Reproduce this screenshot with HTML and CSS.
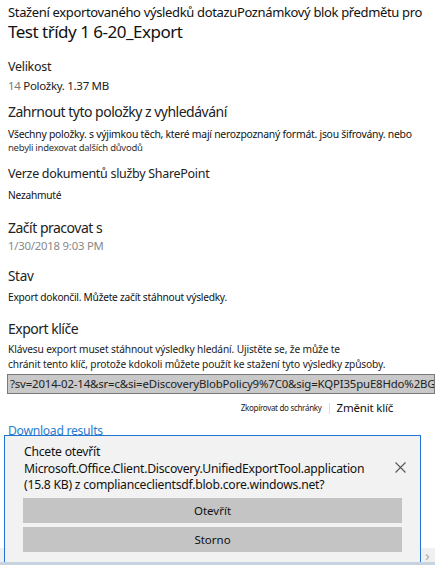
FILE: index.html
```html
<!DOCTYPE html>
<html lang="cs">
<head>
    <meta charset="UTF-8">
    <meta name="viewport" content="width=device-width, initial-scale=1.0">
    <title>Export</title>
    <link rel="stylesheet" href="styles.css">
</head>
<body>

<div class="panel">
    <header class="head">
        <p class="subtitle">Stažení exportovaného výsledků dotazuPoznámkový blok předmětu pro</p>
        <h1>Test třídy 1 6-20_Export</h1>
    </header>

    <section class="field size">
        <h3>Velikost</h3>
        <p class="value"><span class="muted">14</span> Položky. 1.37 MB</p>
    </section>

    <section class="field include">
        <h2>Zahrnout tyto položky z vyhledávání</h2>
        <p class="small two">Všechny položky. s výjimkou těch, které mají nerozpoznaný formát. jsou šifrovány. nebo<br><span class="tiny">nebyli indexovat dalších důvodů</span></p>
    </section>

    <section class="field versions">
        <h3>Verze dokumentů služby SharePoint</h3>
        <p class="small">Nezahmuté</p>
    </section>

    <section class="field started">
        <h2>Začít pracovat s</h2>
        <p class="date">1/30/2018 9:03 PM</p>
    </section>

    <section class="field status">
        <h3>Stav</h3>
        <p class="small">Export dokončil. Můžete začít stáhnout výsledky.</p>
    </section>

    <section class="field export">
        <h2>Export klíče</h2>
        <p class="desc">Klávesu export muset stáhnout výsledky hledání. Ujistěte se, že může te<br>chránit tento klíč, protože kdokoli můžete použít ke stažení tyto výsledky způsoby.</p>
        <div class="keybox">?sv=2014-02-14&amp;sr=c&amp;si=eDiscoveryBlobPolicy9%7C0&amp;sig=KQPI35puE8Hdo%2BG3c</div>
        <div class="key-actions">
            <span class="copy">Zkopírovat do schránky</span>
            <span class="sep"></span>
            <span class="change">Změnit klíč</span>
        </div>
    </section>

    <a class="download" href="#">Download results</a>
</div>

<div class="strip">
    <span class="arrow">&#x203A;</span>
</div>

<div class="prompt">
    <div class="prompt-top">
        <p class="prompt-text">Chcete otevřít<br>Microsoft.Office.Client.Discovery.UnifiedExportTool.application<br>(15.8 KB) z complianceclientsdf.blob.core.windows.net?</p>
        <svg class="close" width="11" height="11" viewBox="0 0 11 11">
            <path d="M0.5 0.5 L10.5 10.5 M10.5 0.5 L0.5 10.5" stroke="#555" stroke-width="1.1" fill="none"/>
        </svg>
    </div>
    <button class="prompt-btn">Otevřít</button>
    <button class="prompt-btn">Storno</button>
</div>

</body>
</html>
```

FILE: styles.css
```css
body {
    font-family: 'Noto Sans', 'Open Sans', sans-serif;
    color: #222;
    background-color: #fff;
    margin: 0;
    padding: 0;
    height: 565px;
    overflow: hidden;
    position: relative;
}
p {
    margin: 0;
}
.panel {
    padding: 3px 8px 0 8px;
}
.subtitle {
    font-size: 13px;
    line-height: 18px;
    letter-spacing: -0.35px;
    white-space: nowrap;
    color: #111;
}
.head h1 {
    margin: 0;
    font-size: 17px;
    font-weight: normal;
    line-height: 22px;
    letter-spacing: -0.5px;
    color: #111;
}
.field h2 {
    margin: 0;
    font-size: 14px;
    font-weight: normal;
    line-height: 20px;
    letter-spacing: -0.5px;
    color: #222;
}
.field h3 {
    margin: 0;
    font-size: 12.5px;
    font-weight: normal;
    line-height: 18px;
    letter-spacing: -0.3px;
    color: #222;
}
.size { margin-top: 15px; }
.include { margin-top: 8px; }
.versions { margin-top: 11px; }
.started { margin-top: 16px; }
.status { margin-top: 13px; }
.export { margin-top: 15px; }

.value {
    margin-top: 2px;
    font-size: 11.5px;
    line-height: 16px;
    letter-spacing: -0.3px;
    color: #222;
}
.muted {
    color: #777;
}
.small {
    margin-top: 5px;
    font-size: 10.2px;
    line-height: 14px;
    letter-spacing: -0.25px;
    color: #111;
}
.small.two {
    margin-top: 6px;
    font-size: 10.4px;
    line-height: 12.5px;
}
.tiny {
    font-size: 9.5px;
    color: #333;
}
.date {
    font-size: 11.3px;
    line-height: 16px;
    letter-spacing: -0.2px;
    color: #888;
}
.status h3 {
    font-size: 13.5px;
}
.desc {
    margin-top: 3px;
    font-size: 10.2px;
    line-height: 15px;
    letter-spacing: -0.15px;
    color: #222;
}
.keybox {
    margin: 2px -8px 0 -1px;
    border: 1px solid #7a7a7a;
    background-color: #c9c9c9;
    padding: 0 2px;
    height: 18px;
    font-size: 11.4px;
    line-height: 18px;
    letter-spacing: -0.15px;
    white-space: nowrap;
    overflow: hidden;
    color: #222;
}
.key-actions {
    display: flex;
    justify-content: flex-end;
    align-items: center;
    gap: 7px;
    padding-right: 34px;
    margin-top: 7px;
    line-height: 14px;
}
.copy {
    font-size: 8px;
    letter-spacing: -0.3px;
    color: #222;
}
.sep {
    width: 1px;
    height: 11px;
    background-color: #ddd;
}
.change {
    font-size: 11.5px;
    letter-spacing: -0.2px;
    color: #111;
}
.download {
    display: block;
    margin-top: 7px;
    font-size: 12.2px;
    line-height: 18px;
    letter-spacing: -0.3px;
    color: #2a7cd0;
    text-decoration: none;
}
.strip {
    position: absolute;
    left: 0;
    right: 0;
    bottom: 0;
    height: 14px;
    background-color: #f0f0f0;
    border-bottom: 3px solid #c7d3e0;
    display: flex;
    justify-content: flex-end;
    align-items: center;
}
.arrow {
    font-size: 15px;
    line-height: 14px;
    color: #aaa;
    width: 10px;
}
.prompt {
    position: absolute;
    left: 4px;
    top: 435px;
    width: 379px;
    height: 126px;
    padding: 0 18px;
    background-color: #f2f2f2;
    border: 1px solid #1e74d0;
    border-bottom: none;
}
.prompt-top {
    display: flex;
    justify-content: space-between;
    align-items: center;
    padding: 8px 0 4px 1px;
}
.prompt-text {
    font-size: 12.2px;
    line-height: 16.5px;
    letter-spacing: -0.25px;
    color: #111;
}
.close {
    margin-right: -4px;
    margin-top: -2px;
}
.prompt-btn {
    display: block;
    width: 100%;
    height: 25px;
    margin-bottom: 4px;
    border: none;
    background-color: #c4c4c4;
    font-family: 'Noto Sans', 'Open Sans', sans-serif;
    font-size: 11.5px;
    color: #111;
    padding: 0;
}
```
